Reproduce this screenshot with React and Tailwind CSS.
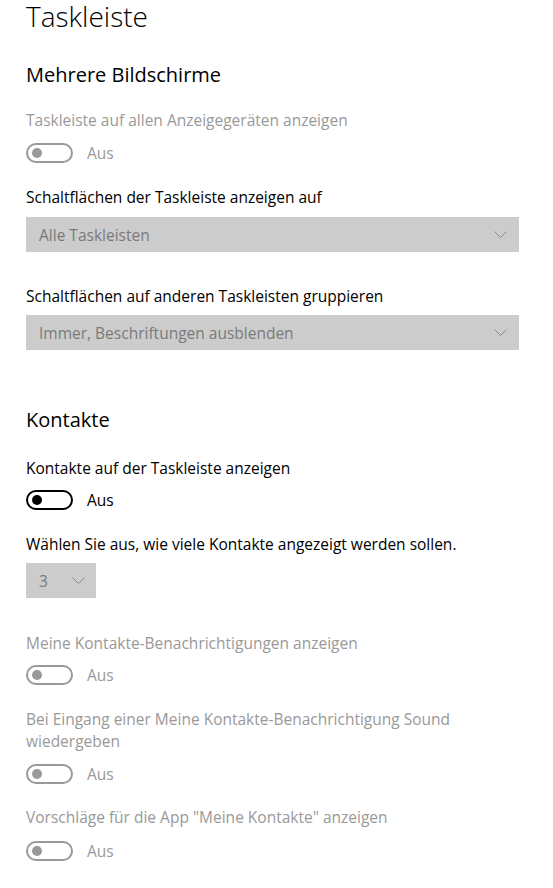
import React from "react";

function Toggle({ disabled }) {
  return (
    <div className="flex items-center h-[20px]">
      <div
        className={
          "w-[47px] h-[20px] rounded-full border-2 flex items-center pl-[4px] " +
          (disabled ? "border-[#999999]" : "border-black")
        }
      >
        <div className={"w-[10px] h-[10px] rounded-full " + (disabled ? "bg-[#999999]" : "bg-black")} />
      </div>
      <span className={"ml-[14px] text-[15.5px] leading-[20px] " + (disabled ? "text-[#999999]" : "text-black")}>Aus</span>
    </div>
  );
}

function Chevron() {
  return (
    <svg width="13" height="7" viewBox="0 0 13 7" className="shrink-0">
      <path d="M0.5 0.5 L6.5 6.5 L12.5 0.5" fill="none" stroke="#8a8a8a" strokeWidth="1" />
    </svg>
  );
}

function Select({ value, className }) {
  return (
    <div className={"h-[35px] bg-[#cccccc] flex items-center justify-between pl-[13px] pr-[12px] " + className}>
      <span className="text-[15.5px] leading-[20px] text-[#7a7a7a]">{value}</span>
      <Chevron />
    </div>
  );
}

export default function App() {
  return (
    <div
      className="w-[553px] h-[888px] bg-white overflow-hidden pl-[26px] pr-[35px]"
      style={{ fontFamily: '"Open Sans", "Noto Sans", sans-serif' }}
    >
      <h1 className="text-[28px] leading-[32px] font-light text-black">Taskleiste</h1>
      <h2 className="mt-[29px] text-[20px] leading-[28px] text-black">Mehrere Bildschirme</h2>

      <p className="mt-[21px] text-[15.5px] leading-[20px] text-[#999999]">Taskleiste auf allen Anzeigegeräten anzeigen</p>
      <div className="mt-[13px]"><Toggle disabled /></div>

      <p className="mt-[24px] text-[15.5px] leading-[20px] text-black">Schaltflächen der Taskleiste anzeigen auf</p>
      <Select value="Alle Taskleisten" className="mt-[10px] w-[493px]" />

      <p className="mt-[34px] text-[15.5px] leading-[20px] text-black">Schaltflächen auf anderen Taskleisten gruppieren</p>
      <Select value="Immer, Beschriftungen ausblenden" className="mt-[9px] w-[493px]" />

      <h2 className="mt-[56px] text-[20px] leading-[28px] text-black">Kontakte</h2>

      <p className="mt-[24px] text-[15.5px] leading-[20px] text-black">Kontakte auf der Taskleiste anzeigen</p>
      <div className="mt-[12px]"><Toggle /></div>

      <p className="mt-[24px] text-[15.5px] leading-[20px] text-black">Wählen Sie aus, wie viele Kontakte angezeigt werden sollen.</p>
      <div className="mt-[9px] w-[70px] h-[35px] bg-[#cccccc] flex items-center justify-between pl-[13px] pr-[11px]">
        <span className="text-[15.5px] leading-[20px] text-[#7a7a7a]">3</span>
        <Chevron />
      </div>

      <p className="mt-[35px] text-[15.5px] leading-[20px] text-[#999999]">Meine Kontakte-Benachrichtigungen anzeigen</p>
      <div className="mt-[12px]"><Toggle disabled /></div>

      <p className="mt-[23px] text-[15.5px] leading-[22px] text-[#999999] w-[460px]">Bei Eingang einer Meine Kontakte-Benachrichtigung Sound wiedergeben</p>
      <div className="mt-[12px]"><Toggle disabled /></div>

      <p className="mt-[23px] text-[15.5px] leading-[20px] text-[#999999]">Vorschläge für die App "Meine Kontakte" anzeigen</p>
      <div className="mt-[14px]"><Toggle disabled /></div>
    </div>
  );
}
